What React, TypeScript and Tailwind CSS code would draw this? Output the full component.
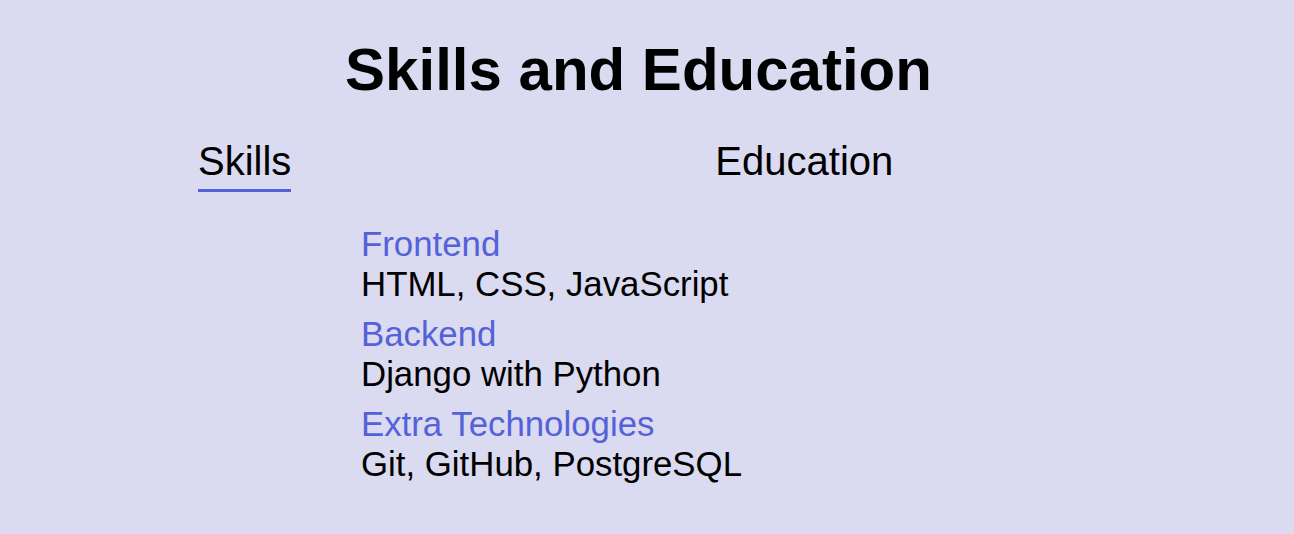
export default function App() {
  const items = [
    { label: "Frontend", value: "HTML, CSS, JavaScript" },
    { label: "Backend", value: "Django with Python" },
    { label: "Extra Technologies", value: "Git, GitHub, PostgreSQL" },
  ];
  return (
    <div
      className="min-h-[534px] w-full bg-[#dadaf0] text-black"
      style={{ fontFamily: '"Liberation Sans", Arial, sans-serif' }}
    >
      <div className="w-[1277px] pt-[35px]">
        <h1 className="text-center text-[60px] font-bold leading-[69px]">Skills and Education</h1>
        <div className="mt-[34px] flex pl-[198px]">
          <button className="border-b-[3px] border-[#5561d8] pb-[5px] text-[40px] leading-[46px]">Skills</button>
          <button className="ml-[424px] pb-[8px] text-[40px] leading-[46px]">Education</button>
        </div>
        <div className="mt-[32px] flex flex-col gap-[10px] pl-[361px]">
          {items.map((it) => (
            <div key={it.label} className="flex flex-col text-[34.8px] leading-[40px]">
              <span className="text-[#5561d8]">{it.label}</span>
              <span>{it.value}</span>
            </div>
          ))}
        </div>
      </div>
    </div>
  );
}
